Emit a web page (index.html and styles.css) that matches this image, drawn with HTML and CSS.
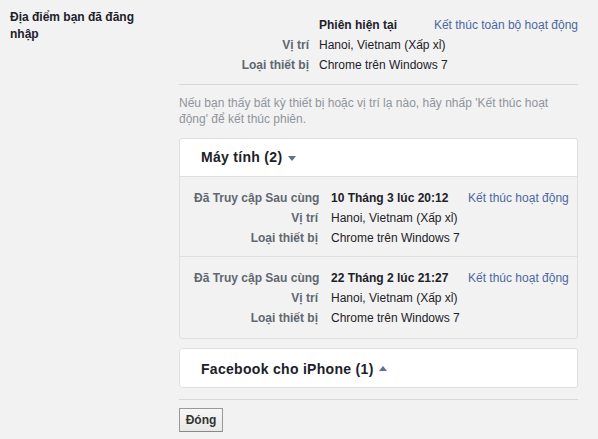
FILE: index.html
```html
<!DOCTYPE html>
<html lang="vi">
<head>
<meta charset="utf-8">
<title>Địa điểm bạn đã đăng nhập</title>
<link rel="stylesheet" href="styles.css">
</head>
<body>
<div class="page">
  <div class="left-label">Địa điểm bạn đã đăng nhập</div>
  <div class="content">
    <div class="current">
      <div class="lbl"></div>
      <div class="val split"><b class="strong">Phiên hiện tại</b><a class="link" href="#">Kết thúc toàn bộ hoạt động</a></div>
      <div class="lbl">Vị trí</div>
      <div class="val">Hanoi, Vietnam (Xấp xỉ)</div>
      <div class="lbl">Loại thiết bị</div>
      <div class="val">Chrome trên Windows 7</div>
    </div>
    <p class="note">Nếu bạn thấy bất kỳ thiết bị hoặc vị trí lạ nào, hãy nhấp 'Kết thúc hoạt động' để kết thúc phiên.</p>

    <div class="card">
      <div class="card-head">Máy tính (2) <span class="caret down"></span></div>
      <div class="card-body">
        <div class="session">
          <div class="lbl">Đã Truy cập Sau cùng</div>
          <div class="val strong">10 Tháng 3 lúc 20:12</div>
          <a class="link" href="#">Kết thúc hoạt động</a>
          <div class="lbl">Vị trí</div>
          <div class="val">Hanoi, Vietnam (Xấp xỉ)</div>
          <div></div>
          <div class="lbl">Loại thiết bị</div>
          <div class="val">Chrome trên Windows 7</div>
          <div></div>
        </div>
        <div class="session">
          <div class="lbl">Đã Truy cập Sau cùng</div>
          <div class="val strong">22 Tháng 2 lúc 21:27</div>
          <a class="link" href="#">Kết thúc hoạt động</a>
          <div class="lbl">Vị trí</div>
          <div class="val">Hanoi, Vietnam (Xấp xỉ)</div>
          <div></div>
          <div class="lbl">Loại thiết bị</div>
          <div class="val">Chrome trên Windows 7</div>
          <div></div>
        </div>
      </div>
    </div>

    <div class="card card-closed">
      <div class="card-head">Facebook cho iPhone (1) <span class="caret up"></span></div>
    </div>

    <div class="footer">
      <button class="btn" type="button">Đóng</button>
    </div>
  </div>
</div>
</body>
</html>
```

FILE: styles.css
```css
html, body {
  margin: 0;
  padding: 0;
  background: #f2f2f2;
}
body {
  font-family: "Liberation Sans", Arial, sans-serif;
  font-size: 12px;
  color: #1d2129;
}
.page {
  display: flex;
  padding: 9px 0 0 10px;
}
.left-label {
  width: 130px;
  margin-right: 39px;
  font-weight: bold;
  line-height: 17px;
  color: #1d2129;
}
.content {
  width: 399px;
}
.current {
  display: grid;
  grid-template-columns: 130px 1fr;
  column-gap: 10px;
  line-height: 20px;
  padding-top: 6px;
  padding-bottom: 9px;
  border-bottom: 1px solid #d6d7da;
}
.lbl {
  text-align: right;
  font-weight: bold;
  color: #606770;
  white-space: nowrap;
}
.val {
  color: #1d2129;
  white-space: nowrap;
}
.split {
  display: flex;
  justify-content: space-between;
}
.strong {
  font-weight: bold;
  color: #1d2129;
}
.link {
  color: #4b67a1;
  text-decoration: none;
  white-space: nowrap;
}
.note {
  margin: 10px 0 11px;
  line-height: 16px;
  color: #90949c;
}
.card {
  background: #f2f2f2;
  border: 1px solid #dddfe2;
  border-radius: 3px;
}
.card-head {
  background: #fff;
  height: 37px;
  line-height: 37px;
  padding-left: 21px;
  font-size: 14px;
  font-weight: bold;
  letter-spacing: 0.3px;
  color: #1d2129;
  border-bottom: 1px solid #dddfe2;
  border-radius: 3px 3px 0 0;
}
.card-closed {
  margin-top: 9px;
  background: #fff;
}
.card-closed .card-head {
  height: 38px;
  line-height: 40px;
  border-bottom: none;
  border-radius: 3px;
}
.caret {
  display: inline-block;
  width: 0;
  height: 0;
  border-left: 4px solid transparent;
  border-right: 4px solid transparent;
  vertical-align: middle;
  margin-left: 1px;
}
.caret.down {
  border-top: 5px solid #5b7190;
}
.caret.up {
  border-bottom: 5px solid #5b7190;
  margin-top: -3px;
}
.session {
  display: grid;
  grid-template-columns: 124px 127px auto;
  column-gap: 13px;
  line-height: 20px;
  padding: 11px 0 8px 14px;
}
.session .link {
  margin-left: -3px;
}
.session + .session {
  border-top: 1px solid #dddfe2;
  padding-top: 11px;
  padding-bottom: 10px;
}
.footer {
  margin-top: 11px;
  border-top: 1px solid #d6d7da;
  padding-top: 8px;
}
.btn {
  font-family: "Liberation Sans", Arial, sans-serif;
  font-size: 12px;
  font-weight: bold;
  color: #333;
  height: 24px;
  width: 44px;
  padding: 0;
  background: linear-gradient(#f6f6f6, #e9e9e9);
  border: 1px solid #999;
  border-bottom-color: #888;
  border-radius: 0;
  box-shadow: 0 1px 0 rgba(0, 0, 0, 0.08);
}
```
